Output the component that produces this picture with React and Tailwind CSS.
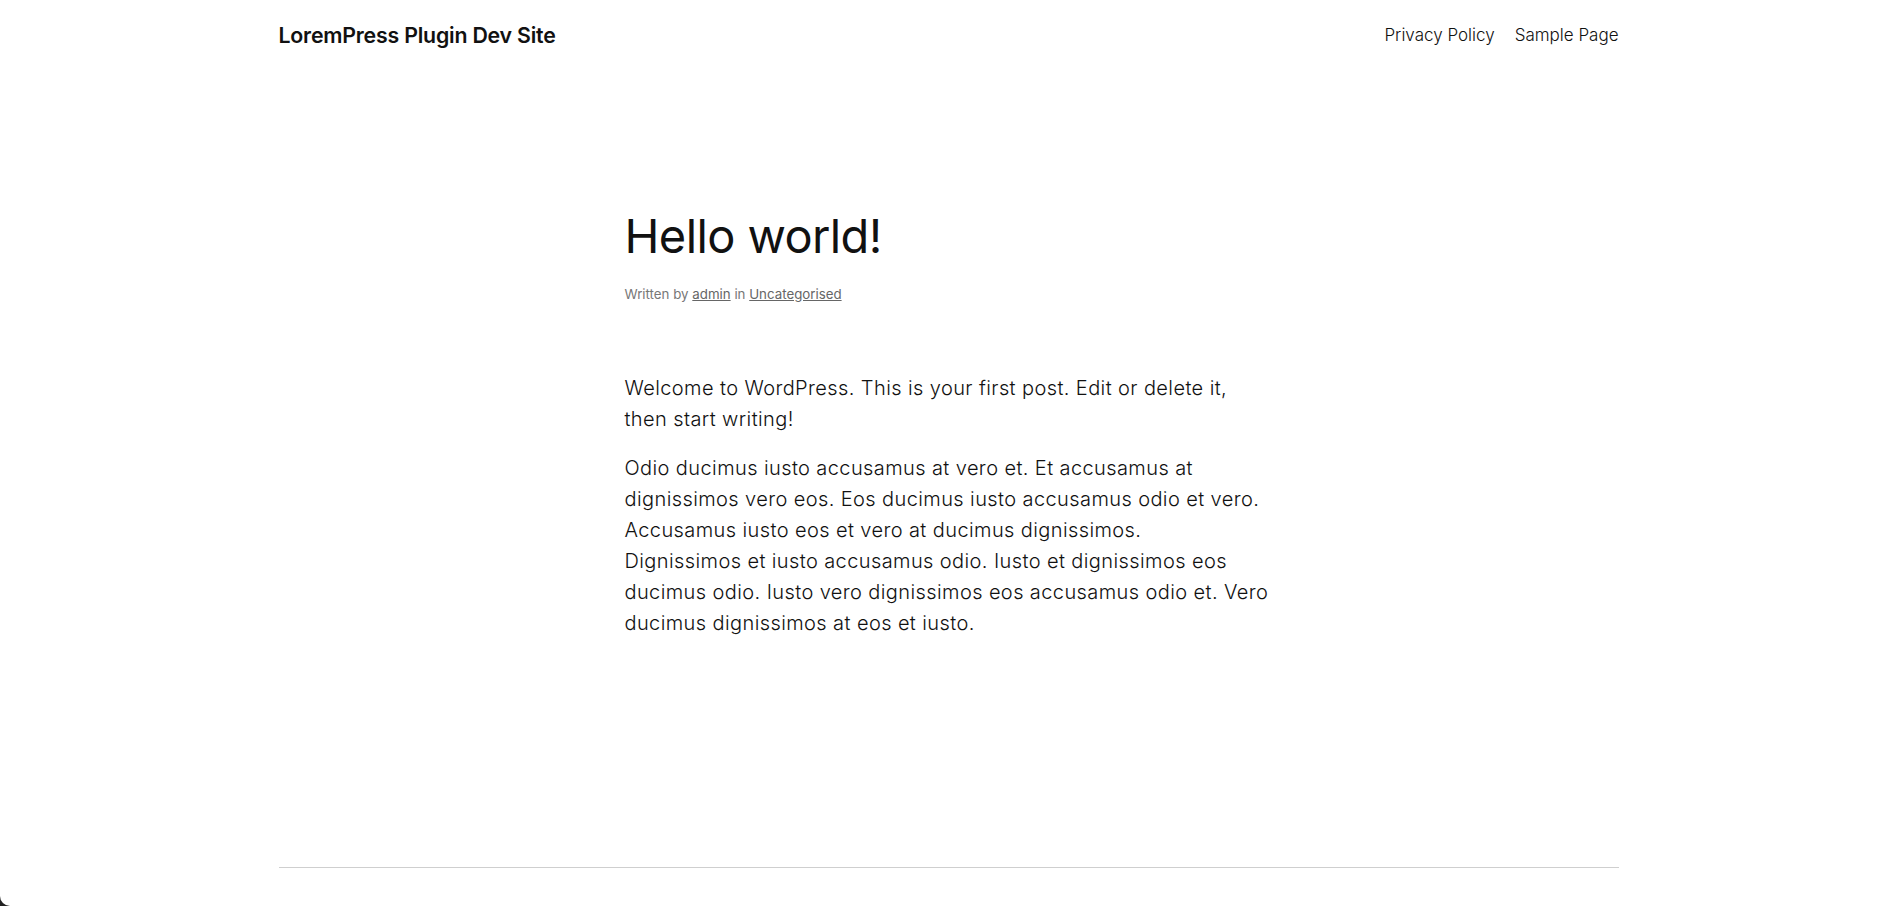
export default function App() {
  return (
    <div className="relative min-h-screen bg-white text-[#111] font-['Inter','Liberation_Sans',sans-serif]">
      {/* Header */}
      <header className="max-w-[1340px] mx-auto h-[72px] flex items-center justify-between">
        <a href="#" className="text-[21.3px] font-semibold tracking-[-0.2px] text-[#111]">
          LoremPress Plugin Dev Site
        </a>
        <nav className="flex items-center gap-5 text-[17px] font-light text-[#111]">
          <a href="#">Privacy Policy</a>
          <a href="#">Sample Page</a>
        </nav>
      </header>

      {/* Post */}
      <main className="w-[648px] mx-auto pt-[136px]">
        <h1 className="text-[47px] leading-[1.2] font-normal tracking-[-0.6px] text-[#111]">Hello world!</h1>
        <div className="mt-[20px] text-[13.3px] leading-5 text-[#777]">
          Written by{" "}
          <a href="#" className="underline text-[#666]">admin</a>{" "}
          in{" "}
          <a href="#" className="underline text-[#666]">Uncategorised</a>
        </div>

        <div className="mt-[69px] text-[20px] leading-[31px] font-light tracking-[0.4px] text-[#111]">
          <p>
            Welcome to WordPress. This is your first post. Edit or delete it,
            <br />
            then start writing!
          </p>
          <p className="mt-[18px]">
            Odio ducimus iusto accusamus at vero et. Et accusamus at
            <br />
            dignissimos vero eos. Eos ducimus iusto accusamus odio et vero.
            <br />
            Accusamus iusto eos et vero at ducimus dignissimos.
            <br />
            Dignissimos et iusto accusamus odio. Iusto et dignissimos eos
            <br />
            ducimus odio. Iusto vero dignissimos eos accusamus odio et. Vero
            <br />
            ducimus dignissimos at eos et iusto.
          </p>
        </div>
      </main>

      {/* Footer rule */}
      <footer className="max-w-[1340px] mx-auto mt-[228px]">
        <div className="h-px bg-[#cfcfcf]"></div>
      </footer>

      {/* window corner */}
      <div className="absolute bottom-0 left-0 w-[10px] h-[10px] bg-[#222]">
        <div className="w-full h-full bg-white rounded-bl-[10px]"></div>
      </div>
    </div>
  );
}
